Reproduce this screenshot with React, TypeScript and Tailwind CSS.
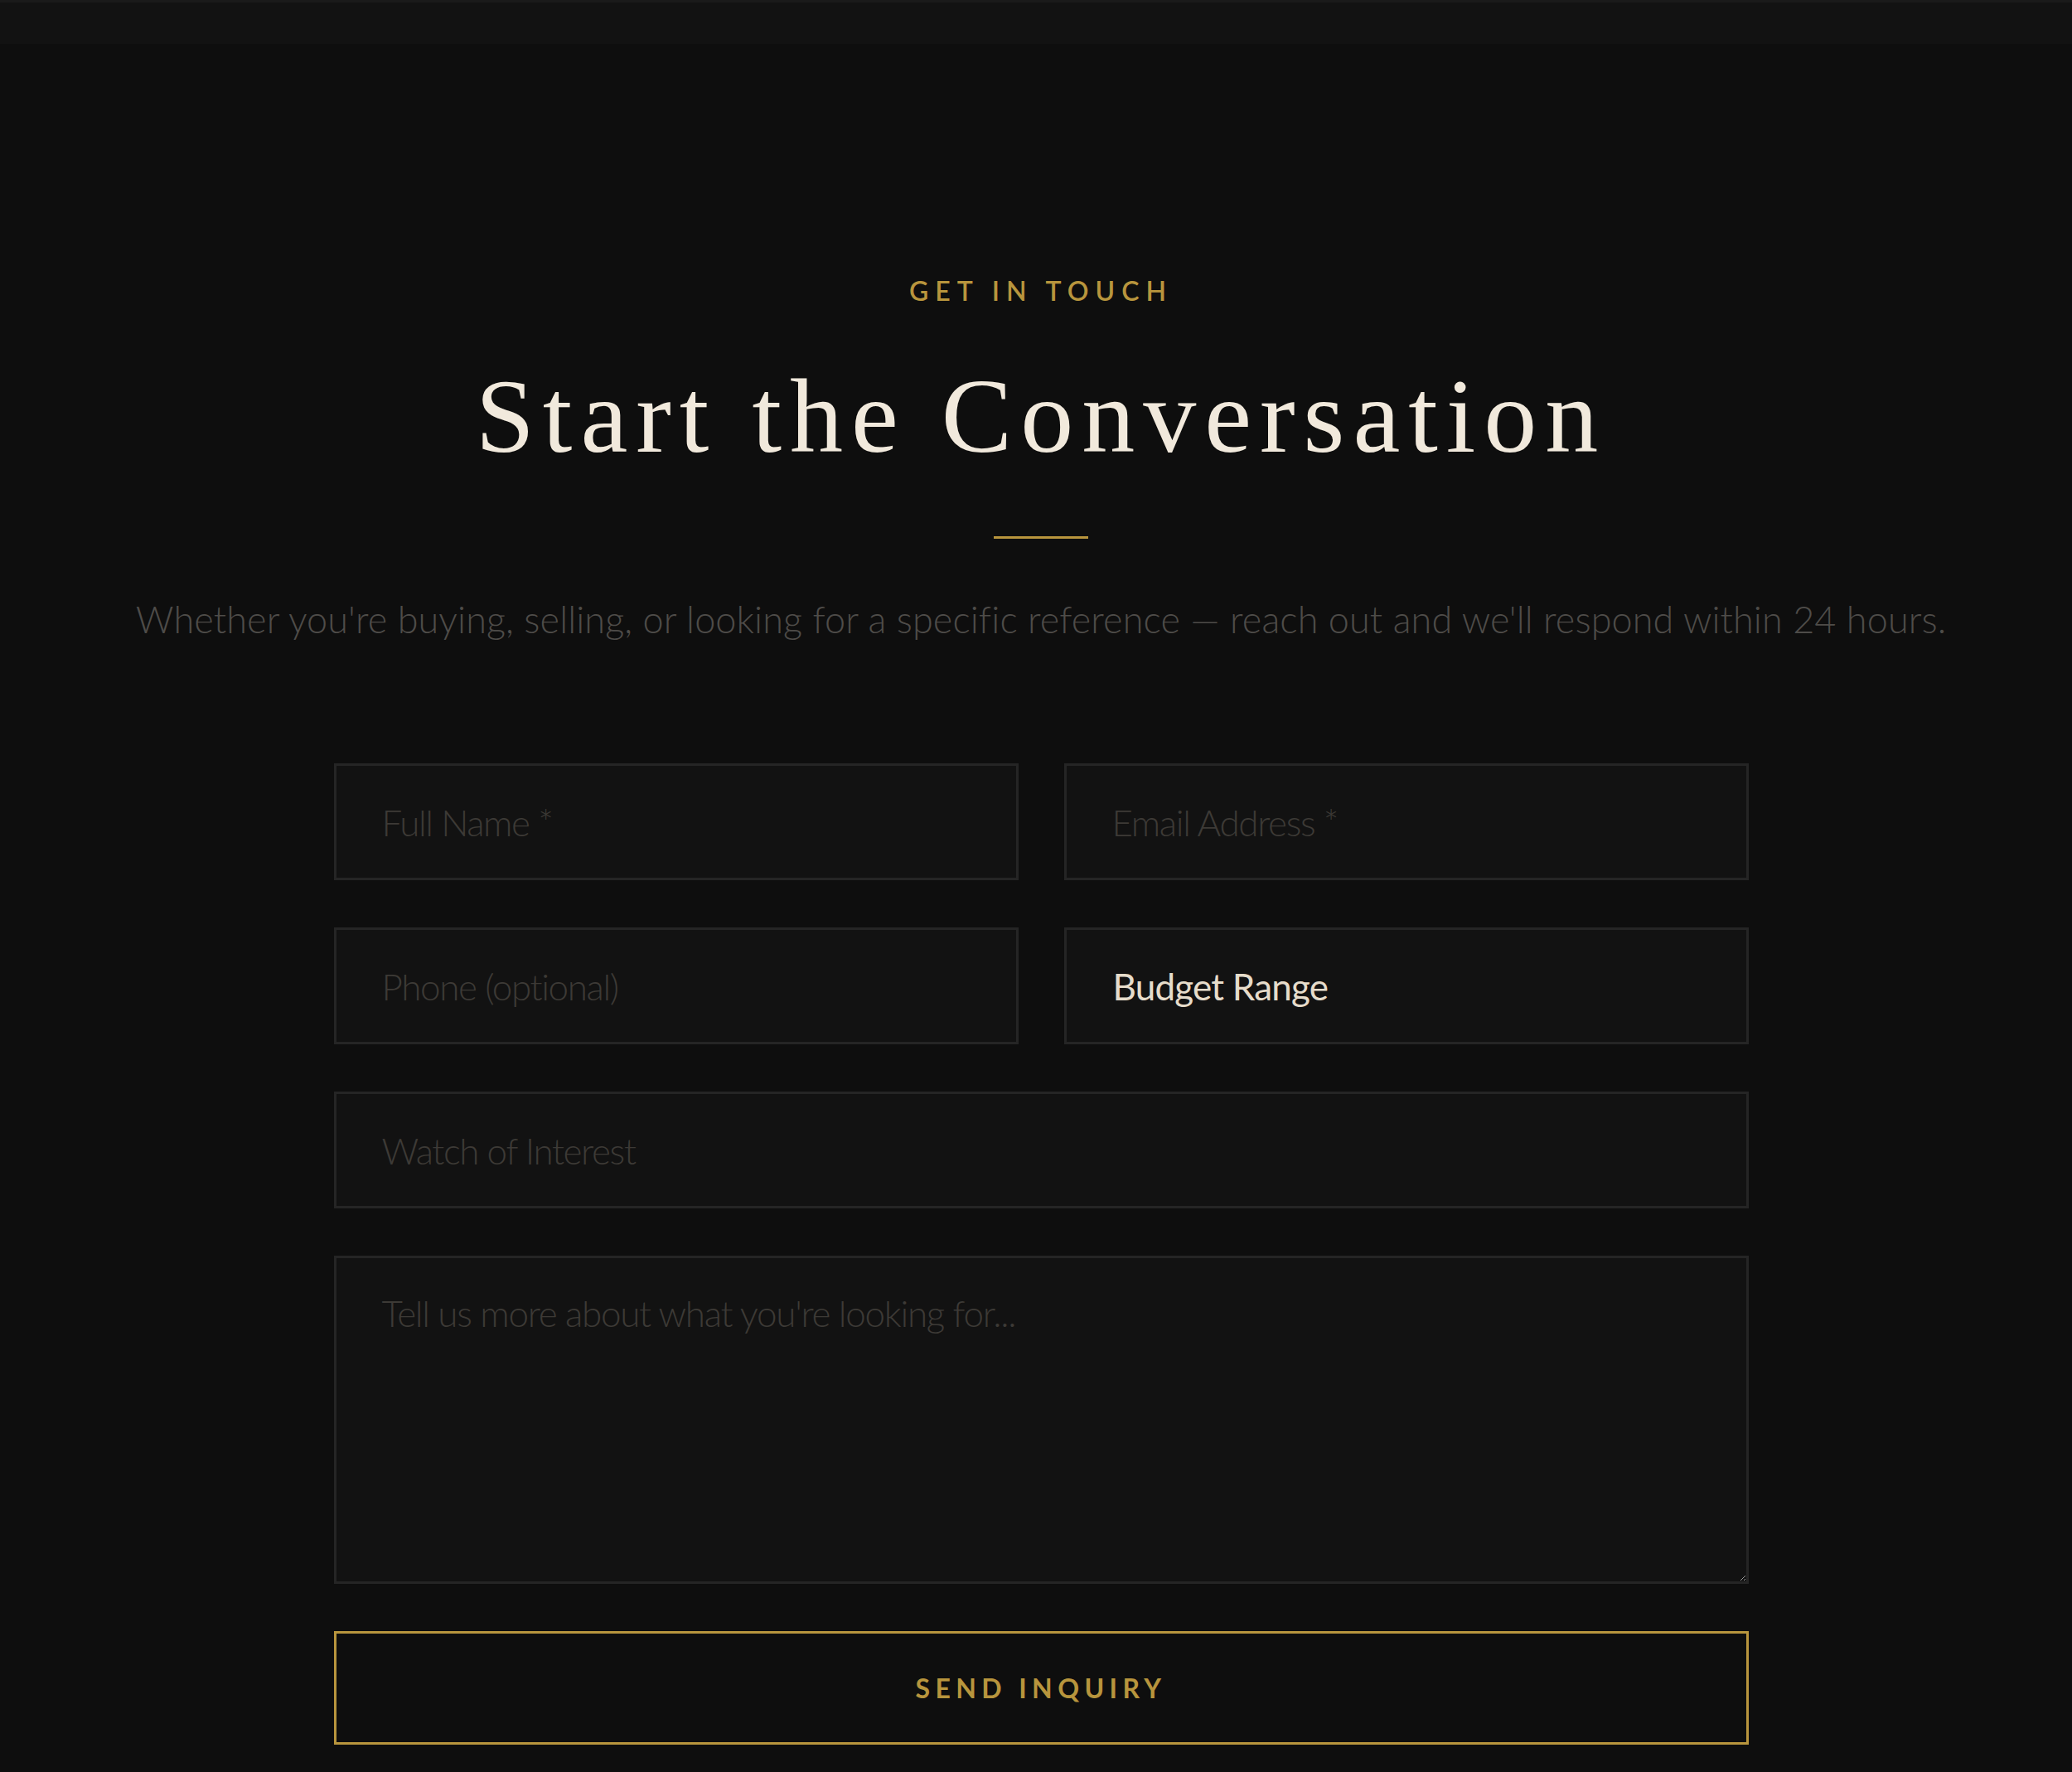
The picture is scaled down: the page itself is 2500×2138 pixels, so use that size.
import React from "react";

const sans = "font-['Lato','Open_Sans',sans-serif]";

function Field({ placeholder }: { placeholder: string }) {
  return (
    <input
      type="text"
      placeholder={placeholder}
      className={`${sans} h-[141px] w-full border-[3px] border-[#252525] bg-[#121212] px-[55px] text-[44px] font-light tracking-[-1.4px] text-[#e6dccb] outline-none placeholder:text-[#3d3a36]`}
    />
  );
}

export default function App() {
  return (
    <div className="min-h-[2138px] w-full bg-[#0e0e0e]">
      {/* nav strip */}
      <div className="h-[53px] w-full border-t-[3px] border-[#1a1a1a] bg-[#121212]" />

      <section className="flex flex-col items-center pl-[12px] pt-[282px] pb-[120px]">
        <p className={`${sans} text-[32px] leading-none font-semibold tracking-[0.25em] text-[#b8953d]`}>
          GET IN TOUCH
        </p>

        <h1 className="mt-[71px] font-['Liberation_Serif','Times_New_Roman',serif] text-[128px] leading-none font-normal tracking-[10px] text-[#f1e9dc]">
          Start the Conversation
        </h1>

        <div className="mt-[81px] h-[3px] w-[114px] bg-[#b8953d]" />

        <p className={`${sans} mt-[75px] text-[45px] leading-none font-light tracking-[0.1px] text-[#4e4c49]`}>
          Whether you're buying, selling, or looking for a specific reference — reach out and we'll respond within 24 hours.
        </p>

        <form className="mt-[151px] grid w-[1707px] grid-cols-2 gap-x-[55px] gap-y-[57px]">
          <Field placeholder="Full Name *" />
          <Field placeholder="Email Address *" />
          <Field placeholder="Phone (optional)" />
          <select
            defaultValue="budget"
            className={`${sans} h-[141px] w-full appearance-none border-[3px] border-[#252525] bg-[#121212] px-[56px] text-[44px] font-normal tracking-[-0.8px] text-[#e6dccb] outline-none`}
          >
            <option value="budget">Budget Range</option>
            <option value="a">Under $10,000</option>
            <option value="b">$10,000 – $25,000</option>
            <option value="c">$25,000 – $50,000</option>
            <option value="d">$50,000+</option>
          </select>
          <div className="col-span-2">
            <Field placeholder="Watch of Interest" />
          </div>
          <textarea
            placeholder="Tell us more about what you're looking for..."
            className={`${sans} col-span-2 h-[396px] w-full border-[3px] border-[#252525] bg-[#121212] px-[55px] pt-[33px] text-[44px] leading-[1.5] font-light tracking-[-1.3px] text-[#e6dccb] outline-none placeholder:text-[#3d3a36]`}
          />
          <button
            type="button"
            className={`${sans} col-span-2 h-[137px] w-full border-[3px] border-[#b8953d] bg-transparent text-[32px] font-bold tracking-[0.2em] text-[#b8953d]`}
          >
            SEND INQUIRY
          </button>
        </form>
      </section>
    </div>
  );
}
